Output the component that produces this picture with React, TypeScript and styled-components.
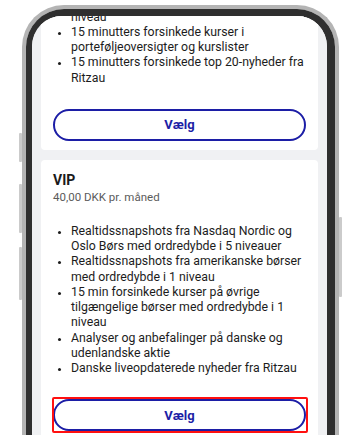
import React from "react";
import styled, { createGlobalStyle } from "styled-components";

const GlobalStyle = createGlobalStyle`
  html, body {
    margin: 0;
    padding: 0;
    background: #ffffff;
    overflow: hidden;
  }
  body {
    font-family: Roboto, "Liberation Sans", Arial, sans-serif;
    color: #1c1c1c;
  }
`;

const Stage = styled.div`
  width: 360px;
  height: 435px;
  overflow: hidden;
  padding: 5px 0 0 22px;
  box-sizing: border-box;
`;

const Phone = styled.div`
  position: relative;
  width: 317px;
  height: 470px;
  box-sizing: border-box;
  border: 4px solid #b4b4b4;
  border-bottom: none;
  border-radius: 42px 42px 0 0;
`;

const SideKey = styled.div<{ $side: "left" | "right"; $top: number; $h: number }>`
  position: absolute;
  ${(p) => (p.$side === "left" ? "left: -7px;" : "right: -7px;")}
  top: ${(p) => p.$top}px;
  height: ${(p) => p.$h}px;
  width: 3px;
  background: #cbcbcb;
  border-radius: 1px;
`;

const Bezel = styled.div`
  height: 100%;
  box-sizing: border-box;
  border-style: solid;
  border-color: #2f2f2f;
  border-width: 7px 8px 0 6px;
  border-radius: 38px 38px 0 0;
`;

const Screen = styled.div`
  height: 100%;
  box-sizing: border-box;
  background: #f0f1f3;
  border-radius: 30px 30px 0 0;
  overflow: hidden;
  padding: 0 9px;
`;

const Scroll = styled.div`
  margin-top: -49px;
  display: flex;
  flex-direction: column;
  gap: 10px;
`;

const Card = styled.section`
  background: #ffffff;
  border-radius: 4px;
  padding: 12px 12px 9px;
`;

const Title = styled.h3`
  margin: 0;
  font-size: 14px;
  line-height: 16px;
  font-weight: 700;
  color: #1a1a1a;
`;

const Price = styled.div`
  margin-top: 2px;
  font-size: 11.5px;
  line-height: 14px;
  color: #5b5b5b;
`;

const List = styled.ul<{ $gap?: number }>`
  margin: ${(p) => p.$gap ?? 0}px -5px 0 0;
  padding: 0 0 0 18px;
  font-size: 12.3px;
  line-height: 15.25px;
  color: #1c1c1c;
  li::marker {
    font-size: 11px;
  }
`;

const ButtonWrap = styled.div<{ $highlight?: boolean }>`
  position: relative;
  margin-top: 23px;
  ${(p) =>
    p.$highlight &&
    `
    &::after {
      content: "";
      position: absolute;
      inset: -2px -1.5px;
      border: 2.5px solid #ff1010;
      border-radius: 2px;
      pointer-events: none;
    }
  `}
`;

const ChooseButton = styled.button`
  display: block;
  width: 100%;
  height: 32px;
  box-sizing: border-box;
  border: 2px solid #1c1ea6;
  border-radius: 16px;
  background: #ffffff;
  color: #1c1ea6;
  font-family: Roboto, "Liberation Sans", Arial, sans-serif;
  font-size: 13px;
  font-weight: 700;
  cursor: pointer;
`;

export default function App() {
  return (
    <>
      <GlobalStyle />
      <Stage>
        <Phone>
          <SideKey $side="left" $top={124} $h={29} />
          <SideKey $side="left" $top={175} $h={49} />
          <SideKey $side="left" $top={238} $h={53} />
          <SideKey $side="right" $top={208} $h={80} />
          <Bezel>
            <Screen>
              <Scroll>
                <Card>
                  <List>
                    <li>15 min forsinkede kurser på øvrige tilgængelige børser med ordredybde i 1 niveau</li>
                    <li>15 minutters forsinkede kurser i porteføljeoversigter og kurslister</li>
                    <li>15 minutters forsinkede top 20-nyheder fra Ritzau</li>
                  </List>
                  <ButtonWrap>
                    <ChooseButton>Vælg</ChooseButton>
                  </ButtonWrap>
                </Card>
                <Card>
                  <Title>VIP</Title>
                  <Price>40,00 DKK pr. måned</Price>
                  <List $gap={20}>
                    <li>Realtidssnapshots fra Nasdaq Nordic og Oslo Børs med ordredybde i 5 niveauer</li>
                    <li>Realtidssnapshots fra amerikanske børser med ordredybde i 1 niveau</li>
                    <li>15 min forsinkede kurser på øvrige tilgængelige børser med ordredybde i 1 niveau</li>
                    <li>Analyser og anbefalinger på danske og udenlandske aktie</li>
                    <li>Danske liveopdaterede nyheder fra Ritzau</li>
                  </List>
                  <ButtonWrap $highlight>
                    <ChooseButton>Vælg</ChooseButton>
                  </ButtonWrap>
                </Card>
              </Scroll>
            </Screen>
          </Bezel>
        </Phone>
      </Stage>
    </>
  );
}
